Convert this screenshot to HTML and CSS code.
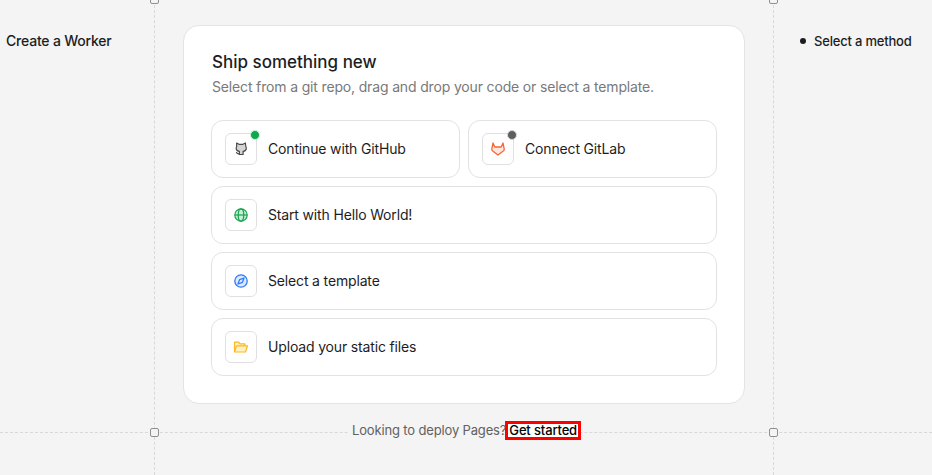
FILE: index.html
```html
<!DOCTYPE html>
<html lang="en">
<head>
<meta charset="utf-8">
<title>Create a Worker</title>
<link rel="stylesheet" href="styles.css">
</head>
<body>
<div class="page">
  <div class="guide guide-v guide-left"></div>
  <div class="guide guide-v guide-right"></div>
  <div class="guide guide-h"></div>
  <span class="handle handle-tl"></span>
  <span class="handle handle-tr"></span>
  <span class="handle handle-bl"></span>
  <span class="handle handle-br"></span>

  <aside class="left"><h1 class="page-title">Create a Worker</h1></aside>

  <main class="center">
    <section class="card">
      <h2 class="card-title">Ship something new</h2>
      <p class="card-sub">Select from a git repo, drag and drop your code or select a template.</p>
      <div class="options">
        <div class="row-two">
          <a class="option">
            <span class="icon-box">
              <svg class="icon" viewBox="0 0 16 16" fill="#d4d4d4" stroke="#4a4a4a" stroke-width="1.2" stroke-linejoin="round" stroke-linecap="round"><path d="M3.600 2 6 3.300h4L12.400 2l.4 3.500c.5.700.6 1.300.5 2.100-.2 1.700-1.400 2.600-3.200 2.800v3.100H6.400v-3.100c-1.800-.2-3-1.100-3.200-2.800-.1-.8 0-1.400.5-2.100z"/><path d="M6.400 12.700c-1.400.3-2.300-.1-2.900-1.200" fill="none"/></svg>
              <span class="dot dot-green"></span>
            </span>
            <span class="label">Continue with GitHub</span>
          </a>
          <a class="option">
            <span class="icon-box">
              <svg class="icon" viewBox="0 0 16 16" fill="#ffe6db" stroke="#f4693a" stroke-width="1.300" stroke-linejoin="round"><path d="M3 2 4.800 6h6.400L13 2l1.200 6c.1.700-.1 1.300-.6 1.800L8 14 2.400 9.800c-.5-.5-.7-1.100-.6-1.800z"/></svg>
              <span class="dot dot-grey"></span>
            </span>
            <span class="label">Connect GitLab</span>
          </a>
        </div>
        <a class="option">
          <span class="icon-box">
            <svg class="icon" viewBox="0 0 16 16" fill="#c9efd7" stroke="#16a452" stroke-width="1.200"><circle cx="8" cy="8" r="6.200"/><ellipse cx="8" cy="8" rx="2.800" ry="6.200" fill="none"/><path d="M1.800 8h12.400" fill="none"/></svg>
          </span>
          <span class="label">Start with Hello World!</span>
        </a>
        <a class="option">
          <span class="icon-box">
            <svg class="icon" viewBox="0 0 16 16" fill="#dbe8ff" stroke="#2f7bf6" stroke-width="1.300" stroke-linejoin="round"><circle cx="8" cy="8" r="6.200"/><path d="M11 5 9.400 9.400 5 11 6.600 6.600z" fill="none"/></svg>
          </span>
          <span class="label">Select a template</span>
        </a>
        <a class="option">
          <span class="icon-box">
            <svg class="icon" viewBox="0 0 16 16" fill="#fff0c2" stroke="#fbb924" stroke-width="1.200" stroke-linejoin="round"><path d="M1.500 13V3.200h4.200l1.300 1.600h5v2"/><path d="M1.500 13 3.500 6.800h11l-2 6.200z"/></svg>
          </span>
          <span class="label">Upload your static files</span>
        </a>
      </div>
    </section>
    <footer class="foot">
      <span class="foot-inner">Looking to deploy Pages?<a class="foot-link">Get started</a></span>
    </footer>
  </main>

  <aside class="right">
    <ul class="steps"><li class="step">Select a method</li></ul>
  </aside>
</div>
</body>
</html>
```
FILE: styles.css
```css
* { box-sizing: border-box; }
html, body { margin: 0; height: 100%; }
body {
  background: #f4f4f4;
  color: #1d1d1f;
  font-family: Inter, "Liberation Sans", sans-serif;
  overflow: hidden;
}
.page {
  position: relative;
  width: 932px;
  height: 475px;
  display: grid;
  grid-template-columns: 154px 620px 158px;
}
.guide { position: absolute; }
.guide-v { top: 0; bottom: 0; width: 0; border-left: 1px dashed #d8d8d8; }
.guide-left { left: 154px; }
.guide-right { left: 773px; }
.guide-h { left: 0; right: 0; top: 432px; height: 0; border-top: 1px dashed #d8d8d8; }
.handle {
  position: absolute;
  width: 9px;
  height: 9px;
  background: #f4f4f4;
  border: 1px solid #8f8f8f;
  border-radius: 2px;
  z-index: 2;
}
.handle-tl { left: 150px; top: -5px; }
.handle-tr { left: 769px; top: -5px; }
.handle-bl { left: 150px; top: 428px; }
.handle-br { left: 769px; top: 428px; }

.left { padding: 32px 0 0 6px; }
.page-title { margin: 0; font-size: 14px; line-height: 18px; font-weight: 500; letter-spacing: -0.2px; }

.center { position: relative; padding: 25px 29px 0; }
.card {
  background: #fff;
  border: 1px solid #e4e4e4;
  border-radius: 16px;
  padding: 25px 27px 27px;
  height: 379px;
}
.card-title { margin: 0 0 0 1px; font-size: 17px; line-height: 22px; font-weight: 500; color: #1d1d1f; }
.card-sub { margin: 4px 0 0 1px; font-size: 14px; line-height: 20px; color: #797979; letter-spacing: -0.157px; }
.options { display: flex; flex-direction: column; gap: 8px; margin-top: 23px; }
.row-two { display: grid; grid-template-columns: 249px 249px; gap: 8px; }
.option {
  display: flex;
  align-items: center;
  gap: 11px;
  height: 58px;
  padding: 0 13px;
  background: #fff;
  border: 1px solid #e2e2e2;
  border-radius: 12px;
}
.icon-box {
  position: relative;
  display: flex;
  align-items: center;
  justify-content: center;
  width: 32px;
  height: 32px;
  border: 1px solid #e0e0e0;
  border-radius: 6px;
  background: #fff;
}
.icon { width: 16px; height: 16px; display: block; }
.dot {
  position: absolute;
  top: -4px;
  right: -4px;
  width: 10px;
  height: 10px;
  border-radius: 50%;
  border: 1.500px solid #e6e6e6;
}
.dot-green { background: #0ea84f; border-color: #cfeeda; }
.dot-grey { background: #5e5e5e; border-color: #d6d6d6; }
.label { font-size: 14px; line-height: 20px; color: #1d1d1f; letter-spacing: -0.157px; }

.foot { display: flex; justify-content: center; margin-top: 17px; }
.foot-inner {
  display: inline-flex;
  align-items: center;
  background: #f4f4f4;
  font-size: 13px;
  line-height: 18px;
  color: #616161;
  letter-spacing: -0.15px;
  position: relative;
  z-index: 1;
  padding: 0 1px 0 3px;
}
.foot-link {
  color: #000;
  font-weight: 500;
  background: #fff;
  outline: 3px solid #ff0000;
  outline-offset: 0;
  margin: 1px 0 0 2px;
  padding: 0 1px;
  line-height: 13px;
}

.right { padding: 32px 0 0 26px; }
.steps { list-style: none; margin: 0; padding: 0; }
.step {
  display: flex;
  align-items: center;
  gap: 8px;
  font-size: 13px;
  line-height: 18px;
  font-weight: 500;
  letter-spacing: -0.2px;
  white-space: nowrap;
}
.step::before {
  content: "";
  width: 6px;
  height: 6px;
  border-radius: 50%;
  background: #1d1d1f;
}
```
